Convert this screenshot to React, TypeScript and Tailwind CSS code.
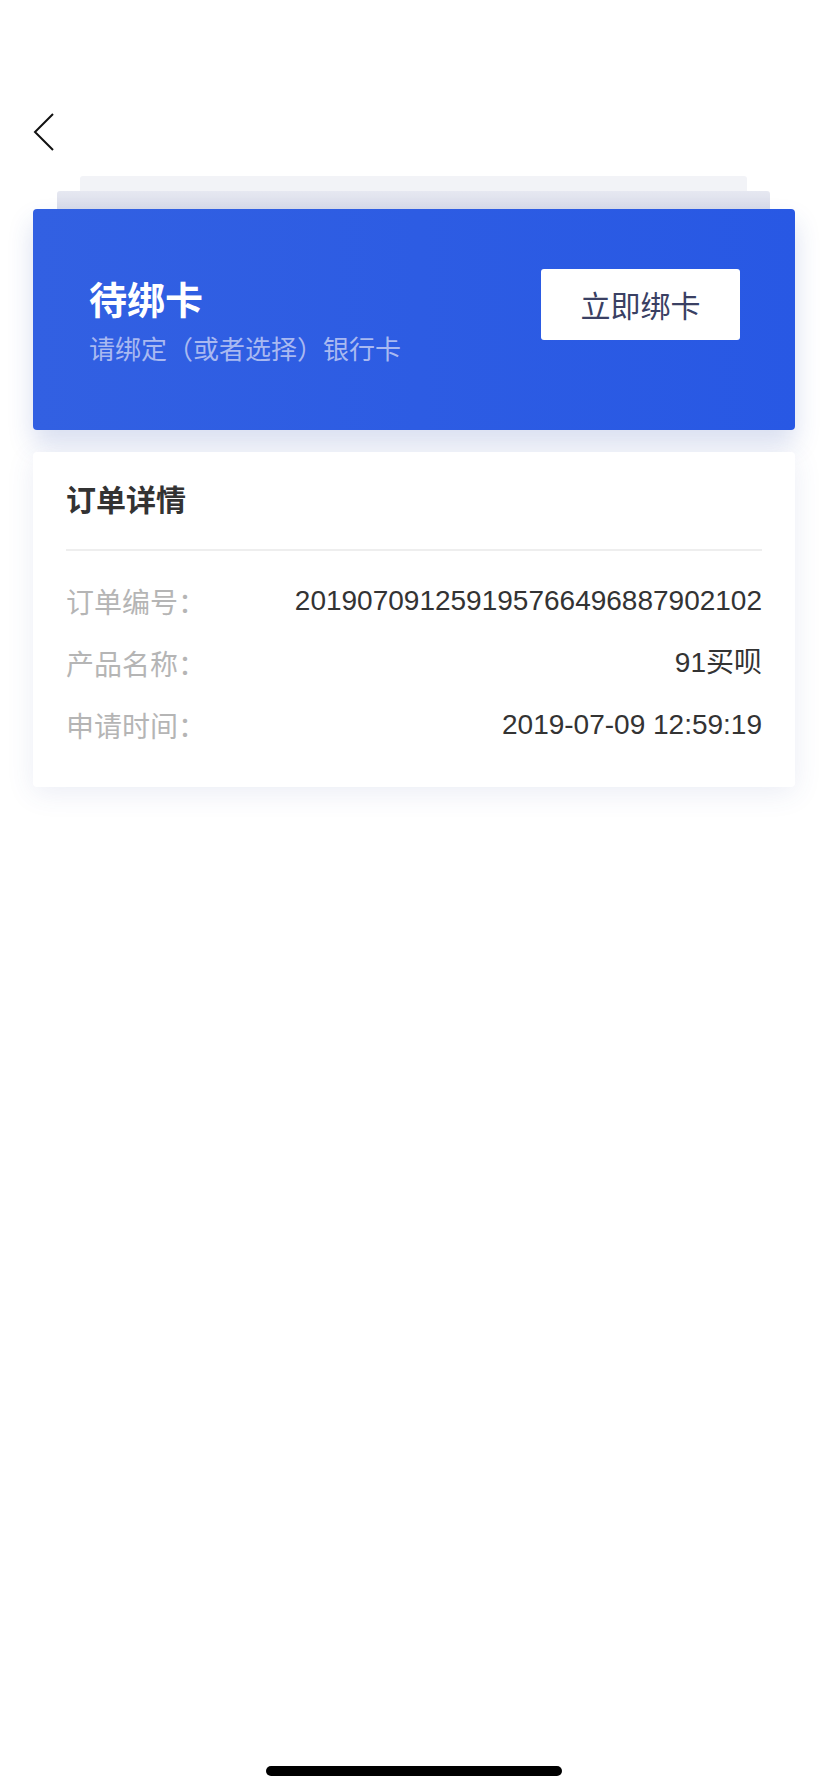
const cjk = { fontFamily: '"Noto Sans CJK SC", "Noto Sans", sans-serif' };
const mixed = { fontFamily: '"Liberation Sans", "Noto Sans CJK SC", sans-serif' };

interface Row {
    label: string;
    value: string;
}

const rows: Row[] = [
    { label: '订单编号：', value: '201907091259195766496887902102' },
    { label: '产品名称：', value: '91买呗' },
    { label: '申请时间：', value: '2019-07-09 12:59:19' },
];

export default function App() {
    return (
        <div className="w-[828px] h-[1792px] bg-white flex flex-col" style={cjk}>
            {/* header */}
            <div className="pt-[112px] pl-[32px] mb-[24px]">
                <svg width="24" height="40" viewBox="0 0 24 40" fill="none">
                    <polyline points="21,2 3,20 21,38" stroke="#111" strokeWidth="2" strokeLinejoin="miter" />
                </svg>
            </div>

            {/* stacked layers behind the card */}
            <div className="ml-[80px] mr-[81px] h-[15px] rounded-t-[3px] bg-[#f2f3f7]" />
            <div className="ml-[57px] mr-[58px] h-[18px] rounded-t-[3px] bg-gradient-to-b from-[#e6e8f1] to-[#d9dcea]" />

            {/* blue card */}
            <div className="mx-[33px] h-[221px] rounded-[4px] bg-gradient-to-r from-[#3260e2] to-[#2858e4] shadow-[0_14px_26px_rgba(40,70,170,0.18)] flex items-center justify-between pl-[56px] pr-[55px]">
                <div className="flex flex-col">
                    <div className="text-[38px] leading-[46px] font-bold text-white">待绑卡</div>
                    <div className="mt-[11px] text-[26px] leading-[32px] text-[#a9b9f1]">请绑定（或者选择）银行卡</div>
                </div>
                <div className="mb-[30px] w-[199px] h-[71px] bg-white rounded-[3px] flex items-center justify-center text-[30px] text-[#3a4063]">
                    立即绑卡
                </div>
            </div>

            {/* order details */}
            <div className="mx-[33px] mt-[22px] bg-white rounded-[4px] shadow-[0_6px_28px_rgba(60,80,160,0.10)] px-[33px] pt-[26px] pb-[31px]">
                <div className="text-[30px] leading-[40px] font-bold text-[#333333]">订单详情</div>
                <div className="mt-[31px] h-[2px] bg-[#eeeeee]" />
                <div className="mt-[19px] flex flex-col">
                    {rows.map((row) => (
                        <div key={row.label} className="h-[62px] flex items-center justify-between">
                            <span className="text-[28px] text-[#b5b5b5]">{row.label}</span>
                            <span className="text-[28px] text-[#333333]" style={mixed}>{row.value}</span>
                        </div>
                    ))}
                </div>
            </div>

            <div className="flex-1" />
            {/* home indicator */}
            <div className="mx-auto w-[296px] h-[10px] rounded-full bg-black mb-[16px]" />
        </div>
    );
}
